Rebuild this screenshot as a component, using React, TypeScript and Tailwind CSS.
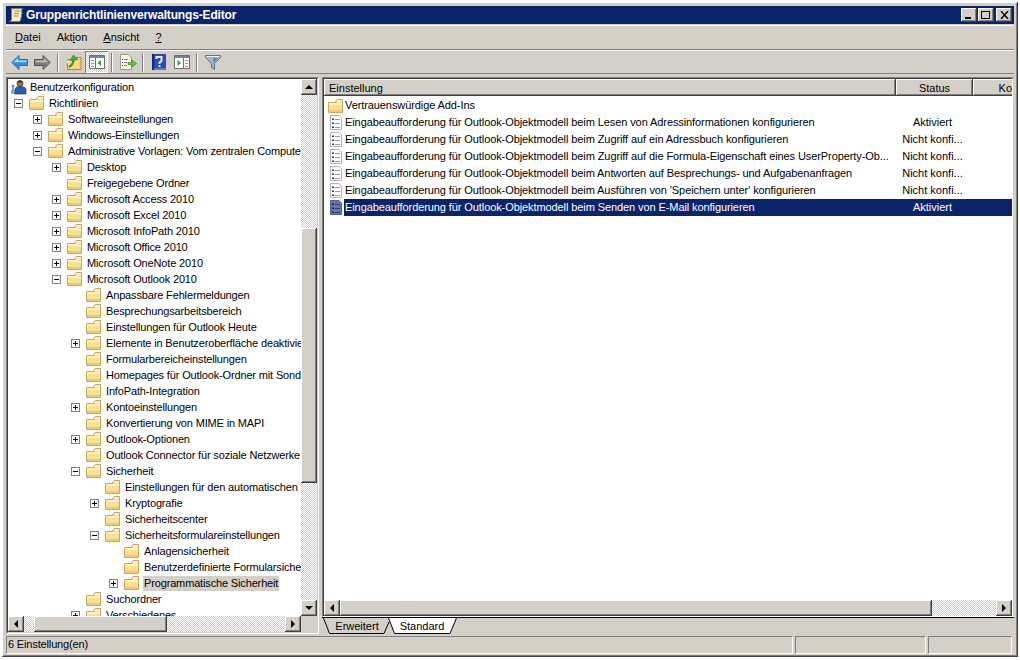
import React from "react";

const bevel =
  "shadow-[inset_-1px_-1px_0_#404040,inset_1px_1px_0_#ffffff,inset_-2px_-2px_0_#808080] bg-[#d4d0c8]";
const dither =
  "bg-[repeating-conic-gradient(#d4d0c8_0_25%,#ffffff_0_50%)] bg-[length:2px_2px]";

function Folder() {
  return (
    <svg width="15" height="14" viewBox="0 0 15 14" className="shrink-0">
      <path d="M0.5 3.5V13.5H14.5V0.5H9L8 1.5V3.5Z" fill="#fbdf93" stroke="#c8a860" />
      <path d="M9 1H14V3H9Z" fill="#eef0ec" />
      <path d="M1 4H14V6H1Z" fill="#fff0c0" />
      <path d="M1 11H14V13H1Z" fill="#f6ca6c" />
    </svg>
  );
}

function SettingIcon({ selected }: { selected?: boolean }) {
  return (
    <svg width="14" height="15" viewBox="0 0 14 15" className="shrink-0">
      <path d="M1.5 0.5H10L12.5 3V14.5H1.5Z" fill={selected ? "#6677a8" : "#ffffff"} stroke={selected ? "#4d5f90" : "#b4b4bc"} />
      <path d="M3 3.5h2v1.5H3zM3 7.5h2v1.5H3zM3 11.5h2v1.5H3z" fill={selected ? "#10204f" : "#3a3a52"} />
      <path d="M6 4h5v1H6zM6 8h5v1H6zM6 12h5v1H6z" fill={selected ? "#2c3c70" : "#9a94c4"} />
    </svg>
  );
}

function Expander({ open }: { open: boolean }) {
  return (
    <span className="flex h-[9px] w-[9px] shrink-0 items-center justify-center border border-[#808080] bg-white">
      <svg width="7" height="7" viewBox="0 0 7 7">
        <path d="M1 3h5v1H1z" fill="#000" />
        {!open && <path d="M3 1h1v5H3z" fill="#000" />}
      </svg>
    </span>
  );
}

type TreeRow = { label: string; depth: number; exp?: "open" | "closed"; selected?: boolean };

const treeRows: TreeRow[] = [
  { label: "Richtlinien", depth: 1, exp: "open" },
  { label: "Softwareeinstellungen", depth: 2, exp: "closed" },
  { label: "Windows-Einstellungen", depth: 2, exp: "closed" },
  { label: "Administrative Vorlagen: Vom zentralen Computer abgerufene Richtliniendefinitionen", depth: 2, exp: "open" },
  { label: "Desktop", depth: 3, exp: "closed" },
  { label: "Freigegebene Ordner", depth: 3 },
  { label: "Microsoft Access 2010", depth: 3, exp: "closed" },
  { label: "Microsoft Excel 2010", depth: 3, exp: "closed" },
  { label: "Microsoft InfoPath 2010", depth: 3, exp: "closed" },
  { label: "Microsoft Office 2010", depth: 3, exp: "closed" },
  { label: "Microsoft OneNote 2010", depth: 3, exp: "closed" },
  { label: "Microsoft Outlook 2010", depth: 3, exp: "open" },
  { label: "Anpassbare Fehlermeldungen", depth: 4 },
  { label: "Besprechungsarbeitsbereich", depth: 4 },
  { label: "Einstellungen für Outlook Heute", depth: 4 },
  { label: "Elemente in Benutzeroberfläche deaktivieren", depth: 4, exp: "closed" },
  { label: "Formularbereicheinstellungen", depth: 4 },
  { label: "Homepages für Outlook-Ordner mit Sonderzeichen", depth: 4 },
  { label: "InfoPath-Integration", depth: 4 },
  { label: "Kontoeinstellungen", depth: 4, exp: "closed" },
  { label: "Konvertierung von MIME in MAPI", depth: 4 },
  { label: "Outlook-Optionen", depth: 4, exp: "closed" },
  { label: "Outlook Connector für soziale Netzwerke", depth: 4 },
  { label: "Sicherheit", depth: 4, exp: "open" },
  { label: "Einstellungen für den automatischen Download", depth: 5 },
  { label: "Kryptografie", depth: 5, exp: "closed" },
  { label: "Sicherheitscenter", depth: 5 },
  { label: "Sicherheitsformulareinstellungen", depth: 5, exp: "open" },
  { label: "Anlagensicherheit", depth: 6 },
  { label: "Benutzerdefinierte Formularsicherheit", depth: 6 },
  { label: "Programmatische Sicherheit", depth: 6, exp: "closed", selected: true },
  { label: "Suchordner", depth: 4 },
  { label: "Verschiedenes", depth: 4, exp: "closed" },
];

const listRows = [
  { name: "Eingabeaufforderung für Outlook-Objektmodell beim Lesen von Adressinformationen konfigurieren", status: "Aktiviert" },
  { name: "Eingabeaufforderung für Outlook-Objektmodell beim Zugriff auf ein Adressbuch konfigurieren", status: "Nicht konfi..." },
  { name: "Eingabeaufforderung für Outlook-Objektmodell beim Zugriff auf die Formula-Eigenschaft eines UserProperty-Ob...", status: "Nicht konfi..." },
  { name: "Eingabeaufforderung für Outlook-Objektmodell beim Antworten auf Besprechungs- und Aufgabenanfragen", status: "Nicht konfi..." },
  { name: "Eingabeaufforderung für Outlook-Objektmodell beim Ausführen von 'Speichern unter' konfigurieren", status: "Nicht konfi..." },
  { name: "Eingabeaufforderung für Outlook-Objektmodell beim Senden von E-Mail konfigurieren", status: "Aktiviert", selected: true },
];

function Arrow({ dir }: { dir: "up" | "down" | "left" | "right" }) {
  const d = {
    up: "M4 1L8 5H0Z",
    down: "M4 5L0 1H8Z",
    left: "M1 4L5 0V8Z",
    right: "M5 4L1 0V8Z",
  }[dir];
  return (
    <svg width="8" height="8" viewBox={dir === "up" || dir === "down" ? "0 -1 8 8" : "-1 0 8 8"}>
      <path d={d} fill="#000" />
    </svg>
  );
}

function ScrollButton({ dir }: { dir: "up" | "down" | "left" | "right" }) {
  return (
    <div className={`flex h-4 w-4 shrink-0 items-center justify-center ${bevel}`}>
      <Arrow dir={dir} />
    </div>
  );
}

function Separator() {
  return <div className="mx-[3px] h-[19px] w-[2px] shrink-0 border-l border-r border-l-[#808080] border-r-white" />;
}

function ToolSlot({ children }: { children: React.ReactNode }) {
  return <div className="flex h-[22px] w-[23px] shrink-0 items-center justify-center">{children}</div>;
}

function Toolbar() {
  return (
    <div className="flex h-[24px] shrink-0 items-center border-t border-t-white border-b border-b-[#808080] pl-[2px]">
      <ToolSlot>
        <svg width="17" height="15" viewBox="0 0 17 15">
          <path d="M8 0.5L0.8 7.5L8 14.5V10.5H16.5V4.5H8Z" fill="#3f9fe6" stroke="#1c6fb8" />
          <path d="M7 3L3 7H15.5V5.5H7Z" fill="#a4e2fa" />
          <path d="M4 9.5L7 12.5V9.5H15.5V8.5H4Z" fill="#2a82d0" />
        </svg>
      </ToolSlot>
      <ToolSlot>
        <svg width="17" height="15" viewBox="0 0 17 15">
          <path d="M9 0.5L16.2 7.5L9 14.5V10.5H0.5V4.5H9Z" fill="#8c8c8c" stroke="#505050" />
          <path d="M1.5 5.5H10V3L13.5 7H1.5Z" fill="#bcbcbc" />
          <path d="M1.5 9.5H10V12L13 8.5H1.5Z" fill="#6e6e6e" />
        </svg>
      </ToolSlot>
      <Separator />
      <ToolSlot>
        <svg width="16" height="16" viewBox="0 0 16 16">
          <path d="M1.5 5.5V15.5H15V3.5H9L7.5 5.5Z" fill="#fbd77e" stroke="#a98a3c" />
          <path d="M1 7H3V9H1Z" fill="#fff0c0" />
          <path d="M3 13C5 12 7 11 7.5 6" fill="none" stroke="#2e9a36" strokeWidth="2.2" />
          <path d="M4 6.5L7.5 1L12 5.5Z" fill="#3eb446" stroke="#1f7a2c" strokeWidth="0.6" />
        </svg>
      </ToolSlot>
      <div className={`flex h-[22px] w-[23px] shrink-0 items-center justify-center ${dither} shadow-[inset_1px_1px_0_#808080,inset_-1px_-1px_0_#ffffff]`}>
        <svg width="16" height="14" viewBox="0 0 16 14">
          <path d="M0.5 0.5H15.5V13.5H0.5Z" fill="#ffffff" stroke="#6b6f78" />
          <path d="M1 1H15V3H1Z" fill="#7c8494" />
          <path d="M6.5 3V13" stroke="#6b6f78" />
          <path d="M2 5h3v1H2zM2 8h3v1H2zM2 11h3v1H2z" fill="#8d94a4" />
          <path d="M12 5V11L8.5 8Z" fill="#2ea03a" />
        </svg>
      </div>
      <Separator />
      <ToolSlot>
        <svg width="18" height="16" viewBox="0 0 18 16">
          <path d="M1.5 0.5H9L12.5 4V15.5H1.5Z" fill="#fffbe8" stroke="#9a9a8a" />
          <path d="M3 5h1v1H3zM3 8h1v1H3zM3 11h1v1H3z" fill="#333" />
          <path d="M5 5h4v1H5zM5 8h3v1H5zM5 11h3v1H5z" fill="#7a74a8" />
          <path d="M9 8.5H13V6L17.5 9.5L13 13V10.5H9Z" fill="#64c83c" stroke="#2a8a24" strokeWidth="0.7" />
        </svg>
      </ToolSlot>
      <Separator />
      <ToolSlot>
        <svg width="14" height="16" viewBox="0 0 14 16">
          <path d="M0 0H14V16H0Z" fill="#2c48b8" />
          <path d="M0 0H2V16H0Z" fill="#14247c" />
          <path d="M2 14H14V16H2Z" fill="#5a74d0" />
          <path d="M4.5 5V3H9.5V7L7.5 8.5V10" fill="none" stroke="#e8ecff" strokeWidth="2" />
          <path d="M6.5 11H8.5V13H6.5Z" fill="#e8ecff" />
        </svg>
      </ToolSlot>
      <ToolSlot>
        <svg width="16" height="14" viewBox="0 0 16 14">
          <path d="M0.5 0.5H15.5V13.5H0.5Z" fill="#ffffff" stroke="#6b6f78" />
          <path d="M1 1H15V3H1Z" fill="#7c8494" />
          <path d="M9.5 3V13" stroke="#6b6f78" />
          <path d="M11 5h3v1h-3zM11 8h3v1h-3zM11 11h3v1h-3z" fill="#8d94a4" />
          <path d="M3.5 5V11L7 8Z" fill="#2ea03a" />
        </svg>
      </ToolSlot>
      <Separator />
      <ToolSlot>
        <svg width="16" height="15" viewBox="0 0 16 15">
          <path d="M0.5 0.5H15.5V2.5L9.5 8.5V14.5L6.5 12.5V8.5L0.5 2.5Z" fill="#9cb8cc" stroke="#5c7488" />
          <path d="M1.5 1H14.5V2H1.5Z" fill="#e8f0f6" />
          <path d="M8 3H13L9 7.5H8Z" fill="#6e8ca0" />
        </svg>
      </ToolSlot>
    </div>
  );
}

function TitleButton({ children }: { children: React.ReactNode }) {
  return <div className={`flex h-[14px] w-4 items-center justify-center ${bevel}`}>{children}</div>;
}

function TreePanel() {
  return (
    <div className="flex w-[313px] shrink-0 flex-col border border-t-[#808080] border-l-[#808080] border-r-white border-b-white">
      <div className="flex min-h-0 flex-1 flex-col border border-t-[#404040] border-l-[#404040] border-r-[#d4d0c8] border-b-[#d4d0c8]">
        <div className="flex min-h-0 flex-1 bg-white">
          <div className="min-w-0 flex-1 overflow-hidden tracking-[-0.15px]">
            <div className="flex h-4 items-center whitespace-nowrap pl-[3px]">
              <svg width="16" height="16" viewBox="0 0 16 16" className="shrink-0">
                <circle cx="9" cy="4.5" r="3" fill="#a87850" stroke="#4a3428" strokeWidth="0.8" />
                <path d="M6 3.5C6.5 1 11.5 1 12 3.5Z" fill="#3a2c24" />
                <path d="M4 15V10.5C4 8.5 6 7.5 9 7.5C12 7.5 15 8.5 15 10.5V15Z" fill="#2c5fa8" stroke="#1c3060" strokeWidth="0.7" />
                <path d="M2 6V12M0.5 7H3.5" stroke="#5a8cc8" strokeWidth="1.5" />
                <circle cx="2.2" cy="13" r="1.8" fill="#88b0dc" stroke="#305080" strokeWidth="0.5" />
              </svg>
              <span className="ml-[3px]">Benutzerkonfiguration</span>
            </div>
            {treeRows.map((row) => (
              <div
                key={row.label}
                className="flex h-4 items-center whitespace-nowrap"
                style={{ paddingLeft: 6 + 19 * (row.depth - 1) }}
              >
                <span className="flex w-[15px] shrink-0 items-center">
                  {row.exp && <Expander open={row.exp === "open"} />}
                </span>
                <Folder />
                <span className={`ml-[4px] px-px leading-[15px] ${row.selected ? "bg-[#d4d0c8]" : ""}`}>{row.label}</span>
              </div>
            ))}
          </div>
          <div className="flex w-4 shrink-0 flex-col">
            <ScrollButton dir="up" />
            <div className={`flex-1 ${dither}`}>
              <div className={`mt-[133px] h-[255px] ${bevel}`} />
            </div>
            <ScrollButton dir="down" />
          </div>
        </div>
        <div className="flex h-4 shrink-0 bg-[#d4d0c8]">
          <div className={`flex min-w-0 flex-1 ${dither}`}>
            <ScrollButton dir="left" />
            <div className="flex-1 pl-[10px]">
              <div className={`h-4 w-[133px] ${bevel}`} />
            </div>
            <ScrollButton dir="right" />
          </div>
          <div className="w-4 shrink-0" />
        </div>
      </div>
    </div>
  );
}

function ListPanel() {
  return (
    <div className="flex min-w-0 flex-1 flex-col">
      <div className="flex min-h-0 flex-1 flex-col border border-t-[#808080] border-l-[#808080] border-r-[#d4d0c8] border-b-white">
        <div className="flex min-h-0 flex-1 flex-col border-t border-l border-r border-t-[#404040] border-l-[#404040] border-r-white">
          <div className="flex h-[17px] shrink-0 overflow-hidden">
            <div className={`flex w-[572px] shrink-0 items-center pl-[5px] pt-px ${bevel}`}>Einstellung</div>
            <div className={`flex w-[77px] shrink-0 items-center justify-center pt-px ${bevel}`}>Status</div>
            <div className={`flex w-[108px] shrink-0 items-center justify-center pt-px ${bevel}`}>Kommentar</div>
          </div>
          <div className="min-h-0 flex-1 overflow-hidden bg-white pl-[4px] pt-px">
            <div className="flex h-[17px] items-center whitespace-nowrap">
              <Folder />
              <span className="ml-[2px] tracking-[-0.09px]">Vertrauenswürdige Add-Ins</span>
            </div>
            {listRows.map((row) => (
              <div key={row.name} className="flex h-[17px] items-center whitespace-nowrap">
                <span className="flex w-[16px] shrink-0 pl-px">
                  <SettingIcon selected={row.selected} />
                </span>
                <div className={`flex h-[17px] flex-1 items-center ${row.selected ? "bg-[#0a246a] text-white" : ""}`}>
                  <span className="w-[550px] shrink-0 overflow-hidden pl-px tracking-[-0.09px]">{row.name}</span>
                  <span className="w-[77px] shrink-0 text-center">{row.status}</span>
                </div>
              </div>
            ))}
          </div>
          <div className="flex h-4 shrink-0 bg-white">
            <div className={`flex min-w-0 flex-1 ${dither}`}>
              <ScrollButton dir="left" />
              <div className={`h-4 w-[592px] ${bevel}`} />
              <div className="flex-1" />
              <ScrollButton dir="right" />
            </div>
          </div>
        </div>
      </div>
      <div className="flex h-[17px] shrink-0 items-start border-t border-t-black pl-px">
        <div className="relative flex h-[16px] w-[66px] items-center justify-center pl-[2px]">
          <svg width="72" height="16" viewBox="0 0 72 16" className="absolute left-0 top-0">
            <path d="M0.5 0L6.5 15.5H61L66 4" fill="none" stroke="#000" />
          </svg>
          <span className="relative">Erweitert</span>
        </div>
        <div className="relative flex h-[16px] w-[66px] items-center justify-center">
          <svg width="70" height="17" viewBox="0 0 70 17" className="absolute left-[-1px] top-[-1px]">
            <path d="M0.5 1L6.5 16.5H62L68.5 1Z" fill="#ffffff" />
            <path d="M0.5 1L6.5 16.5H62L68.5 1" fill="none" stroke="#000" />
          </svg>
          <span className="relative">Standard</span>
        </div>
      </div>
    </div>
  );
}

export default function App() {
  return (
    <div className="h-[660px] w-[1020px] bg-white pl-[2px] pt-[2px] font-['Liberation_Sans',sans-serif] text-[11px] text-black">
      <div className="flex h-[655px] w-[1016px] flex-col bg-[#d4d0c8] pb-[3px] pl-[4px] pr-[4px] pt-[4px] shadow-[inset_-1px_-1px_0_#404040,inset_1px_1px_0_#ffffff,inset_-2px_-2px_0_#808080]">
        <div className="flex h-[18px] shrink-0 items-center bg-[#0a246a] pl-[2px] pr-[2px]">
          <svg width="16" height="16" viewBox="0 0 16 16" className="shrink-0">
            <path d="M3.5 1.5H14.5C13.5 3 13.5 4 14 6L12.5 13.5C12 14.5 11 14.5 10 14.5H1.5C3 14 3.5 13 3.5 11.5Z" fill="#f4ecc4" stroke="#8a7c50" />
            <path d="M6 4h6M6 6.5h5M5.5 9h5" stroke="#9a8c60" />
          </svg>
          <span className="ml-[2px] flex-1 text-[12px] font-bold tracking-[-0.16px] text-white">Gruppenrichtlinienverwaltungs-Editor</span>
          <div className="flex">
            <TitleButton>
              <svg width="8" height="8" viewBox="0 0 8 8"><path d="M0 6h6v2H0z" fill="#000" /></svg>
            </TitleButton>
            <div className="ml-px">
              <TitleButton>
                <svg width="10" height="10" viewBox="0 0 10 10"><path d="M0.5 1.5H8.5V8.5H0.5Z" fill="none" stroke="#000" /><path d="M0 1h9v1H0z" fill="#000" /></svg>
              </TitleButton>
            </div>
            <div className="ml-[2px]">
              <TitleButton>
                <svg width="9" height="8" viewBox="0 0 9 8"><path d="M1 0L8 8M8 0L1 8" stroke="#000" strokeWidth="1.4" /></svg>
              </TitleButton>
            </div>
          </div>
        </div>
        <div className="mt-px flex h-[25px] shrink-0 items-center gap-[16px] border-t border-t-white border-b border-b-[#808080] pl-[9px]">
          <span><span className="underline">D</span>atei</span>
          <span>Akt<span className="underline">i</span>on</span>
          <span><span className="underline">A</span>nsicht</span>
          <span className="underline">?</span>
        </div>
        <Toolbar />
        <div className="mt-[3px] flex min-h-0 flex-1 gap-[3px]">
          <TreePanel />
          <ListPanel />
        </div>
        <div className="mt-[2px] flex h-[18px] shrink-0 pr-[2px]">
          <div className="flex flex-1 items-center border border-t-[#808080] border-l-[#808080] border-r-white border-b-white pb-px pl-px tracking-[-0.15px]">6 Einstellung(en)</div>
          <div className="ml-[2px] w-[131px] border border-t-[#808080] border-l-[#808080] border-r-white border-b-white" />
          <div className="ml-[2px] w-[84px] border border-t-[#808080] border-l-[#808080] border-r-white border-b-white" />
        </div>
      </div>
    </div>
  );
}
